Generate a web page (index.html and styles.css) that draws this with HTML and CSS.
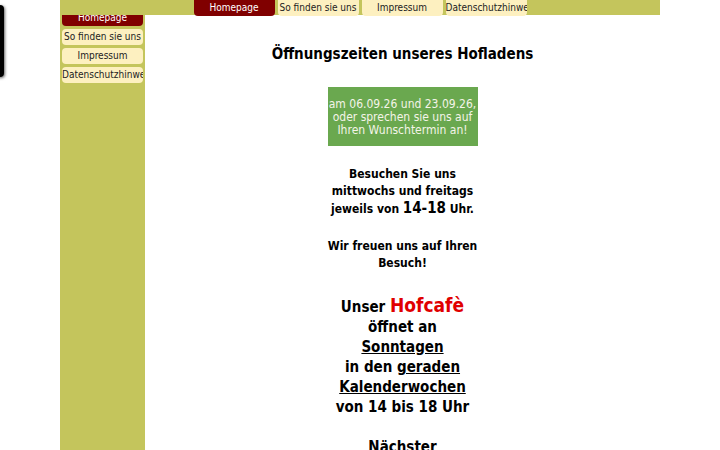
FILE: index.html
```
<!DOCTYPE html>
<html lang="de">
<head>
<meta charset="utf-8">
<title>Hofladen</title>
<link rel="stylesheet" href="styles.css">
</head>
<body>
<div class="side-tab"></div>
<div class="page">
  <header class="topbar">
    <nav class="topnav">
      <a class="tab active">Homepage</a>
      <a class="tab">So finden sie uns</a>
      <a class="tab">Impressum</a>
      <a class="tab">Datenschutzhinweise</a>
    </nav>
  </header>
  <div class="main">
    <aside class="sidebar">
      <a class="sitem active">Homepage</a>
      <a class="sitem">So finden sie uns</a>
      <a class="sitem">Impressum</a>
      <a class="sitem">Datenschutzhinweise</a>
    </aside>
    <section class="content">
      <h1 class="title">Öffnungszeiten unseres Hofladens</h1>
      <div class="notice">am 06.09.26 und 23.09.26, oder sprechen sie uns auf Ihren Wunschtermin an!</div>
      <p class="visit">Besuchen Sie uns<br>mittwochs und freitags<br>jeweils von <span class="big">14-18</span> Uhr.</p>
      <p class="visit">Wir freuen uns auf Ihren<br>Besuch!</p>
      <p class="cafe">Unser <span class="red">Hofcafè</span><br>öffnet an<br><u>Sonntagen</u><br>in den <u>geraden</u><br><u>Kalenderwochen</u><br>von 14 bis 18 Uhr</p>
      <p class="cafe next">Nächster</p>
    </section>
  </div>
</div>
</body>
</html>
```
FILE: styles.css
```
html, body {
  margin: 0;
  padding: 0;
  background: #ffffff;
  font-family: "DejaVu Sans Condensed", "DejaVu Sans", Verdana, sans-serif;
  font-stretch: condensed;
  color: #000;
  overflow: hidden;
  height: 450px;
}
.side-tab {
  position: fixed;
  left: -20px;
  top: 5px;
  width: 24px;
  height: 72px;
  background: #000;
  border-radius: 0 4px 4px 0;
  box-shadow: 1px 1px 3px rgba(0,0,0,0.6);
}
.page {
  width: 600px;
  margin: 0 auto;
  height: 450px;
  display: flex;
  flex-direction: column;
}
.topbar {
  height: 15px;
  background: #c4c55c;
  display: flex;
  justify-content: center;
  position: relative;
  z-index: 2;
}
.topnav {
  display: flex;
  gap: 3px;
  height: 16px;
}
.tab {
  width: 81px;
  height: 16px;
  background: #fdf0c0;
  border-radius: 0 0 4px 4px;
  font-size: 10px;
  line-height: 16px;
  color: #222;
  text-align: center;
  white-space: nowrap;
  overflow: hidden;
}
.tab.active {
  background: #800000;
  color: #fff;
}
.main {
  flex: 1;
  display: flex;
  min-height: 0;
}
.sidebar {
  width: 85px;
  background: #c4c55c;
  display: flex;
  flex-direction: column;
  align-items: center;
  gap: 3px;
  margin-top: -5px;
}
.sitem {
  width: 81px;
  height: 16px;
  background: #fdf0c0;
  border-radius: 4px;
  font-size: 10px;
  line-height: 16px;
  color: #222;
  text-align: center;
  white-space: nowrap;
  overflow: hidden;
}
.sitem.active {
  background: #800000;
  color: #fff;
}
.content {
  flex: 1;
  display: flex;
  flex-direction: column;
  align-items: center;
  text-align: center;
  overflow: hidden;
}
.title {
  font-size: 15px;
  font-weight: bold;
  margin: 31px 0 0;
  line-height: 17px;
}
.notice {
  margin-top: 24px;
  width: 150px;
  box-sizing: border-box;
  padding: 11px 0 9px;
  background: #6aa84f;
  color: #f4f4e8;
  font-size: 12px;
  line-height: 13px;
}
.visit {
  font-size: 12px;
  font-weight: bold;
  line-height: 17px;
  margin: 20px 0 0;
}
.big {
  font-size: 15px;
}
.cafe {
  font-size: 15px;
  font-weight: bold;
  line-height: 20px;
  margin: 23px 0 0;
}
.next {
  margin-top: 20px;
  flex-shrink: 0;
}
.red {
  color: #e00000;
  font-size: 19px;
}
```
